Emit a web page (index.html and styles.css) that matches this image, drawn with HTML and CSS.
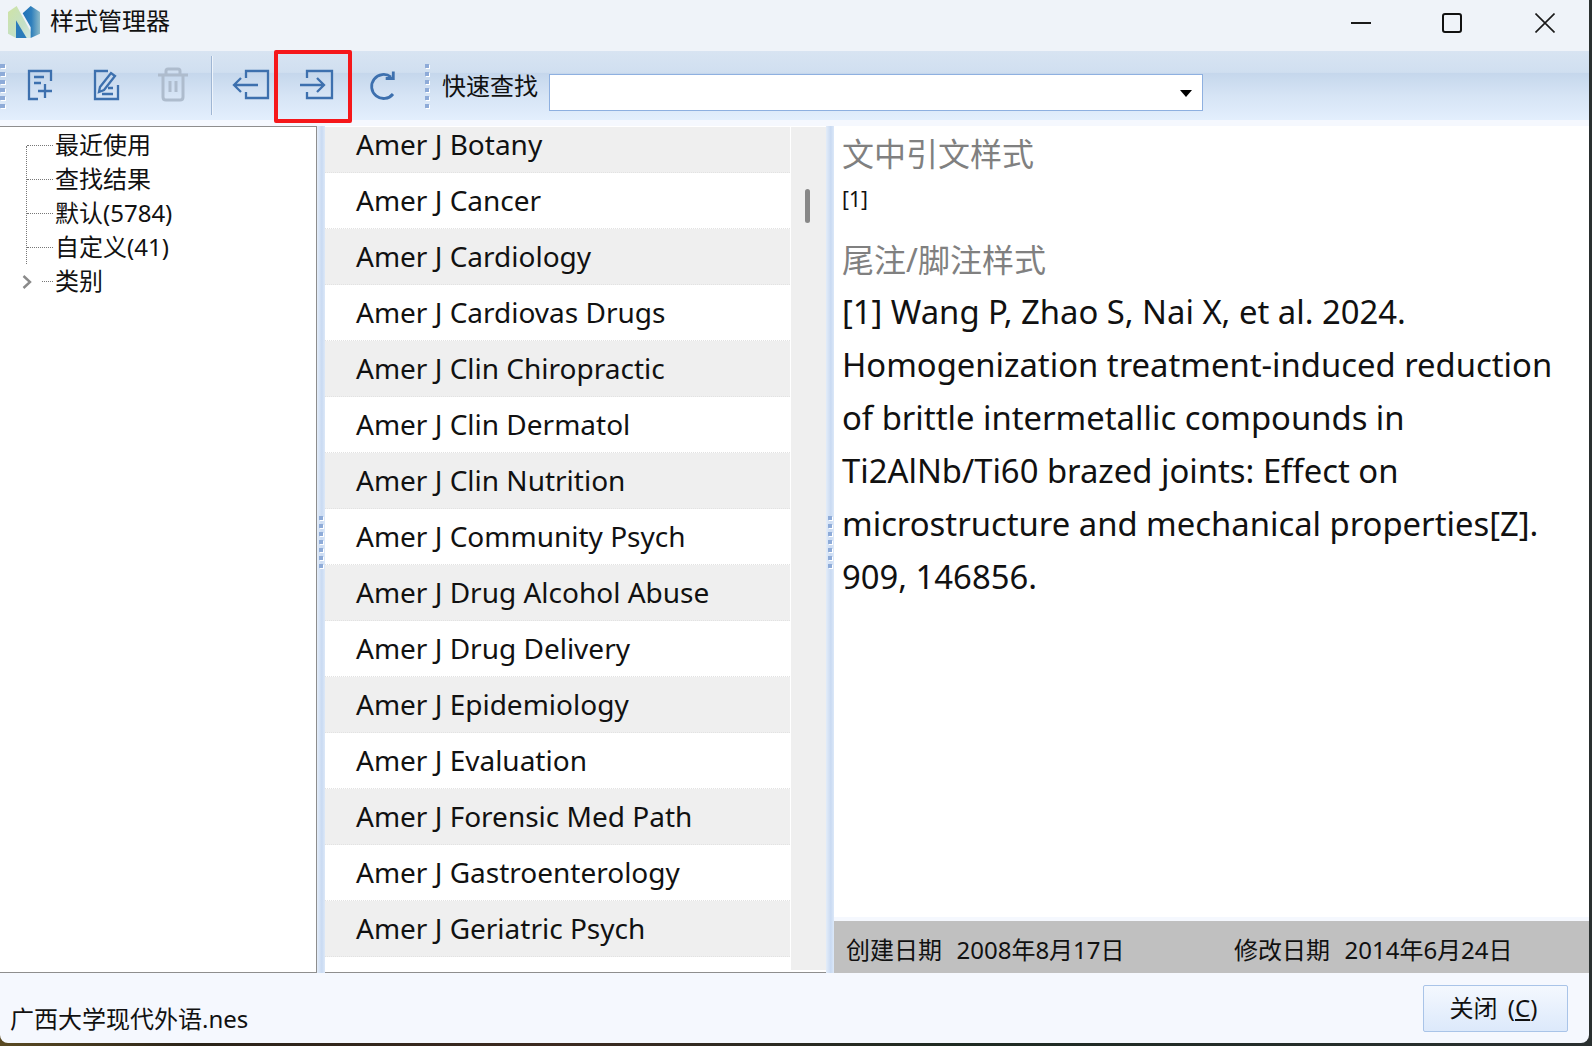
FILE: index.html
```html
<!DOCTYPE html>
<html lang="zh-CN">
<head>
<meta charset="utf-8">
<title>样式管理器</title>
<link rel="stylesheet" href="styles.css">
</head>
<body>
<div class="window">
  <header class="titlebar">
    <svg class="logo" width="40" height="40" viewBox="0 0 120 120">
      <defs>
        <linearGradient id="lg1" x1="0" y1="0" x2="1" y2="1"><stop offset="0" stop-color="#cfe3a4"/><stop offset="0.6" stop-color="#c4e0c6"/><stop offset="1" stop-color="#d7e9e6"/></linearGradient>
        <linearGradient id="lg2" x1="0" y1="0" x2="1" y2="0"><stop offset="0" stop-color="#1e70b8"/><stop offset="0.5" stop-color="#2f7fbc"/><stop offset="1" stop-color="#8dbac9"/></linearGradient>
      </defs>
      <path d="M12 30L38 12L84 96L80 108H36L12 95Z" fill="url(#lg1)"/>
      <path d="M36 55L68 108H36Z" fill="#2a7bbb"/>
      <path d="M56 34L80 12L108 30V95L80 108V76Z" fill="url(#lg2)"/>
    </svg>
    <span class="title-text">样式管理器</span>
    <div class="win-controls">
      <svg class="win-btn" width="20" height="20" viewBox="0 0 20 20"><path d="M0 10H20" stroke="#1a1a1a" stroke-width="2" fill="none"/></svg>
      <svg class="win-btn" width="20" height="20" viewBox="0 0 20 20"><rect x="1" y="1" width="18" height="18" rx="2" stroke="#111" stroke-width="2" fill="none"/></svg>
      <svg class="win-btn" width="20" height="20" viewBox="0 0 20 20"><path d="M0.5 0.5L19.5 19.5M19.5 0.5L0.5 19.5" stroke="#1a1a1a" stroke-width="1.6" fill="none"/></svg>
    </div>
  </header>

  <div class="toolbar">
    <div class="grip grip-edge"><i></i><i></i><i></i><i></i><i></i><i></i></div>
    <button class="tool" type="button">
      <svg width="40" height="40" viewBox="0 0 40 40" class="ico"><path d="M18 34H9V6H31V16M14 12H24M14 18H21M25 19V33M18 26H32"/></svg>
    </button>
    <button class="tool" type="button">
      <svg width="40" height="40" viewBox="0 0 40 40" class="ico"><path d="M22 6H9V34H32V20M14 22L25 8L29 11L18 25L13 27ZM16 29H27M22 23H27"/></svg>
    </button>
    <button class="tool" type="button">
      <svg width="40" height="40" viewBox="0 0 40 40" class="ico ico-off"><path d="M6 10H36M14 10V6Q14 4 16 4H26Q28 4 28 6V10M11 10V32Q11 35 14 35H28Q31 35 31 32V10M18 16V27M24 16V27"/></svg>
    </button>
    <div class="sep"></div>
    <button class="tool" type="button">
      <svg width="40" height="40" viewBox="0 0 40 40" class="ico"><path d="M16 13V6H38V33H16V27M28 20H4M11 13L4 20L11 27"/></svg>
    </button>
    <button class="tool" type="button">
      <svg width="40" height="40" viewBox="0 0 40 40" class="ico"><path d="M11 13V6H36V33H11V27M4 20H27M21 13L28 20L21 27"/></svg>
    </button>
    <button class="tool" type="button">
      <svg width="40" height="40" viewBox="0 0 40 40" class="ico ico-bold"><path d="M29 12A12 12 0 1 0 31 29M31.3 6.5V13.5H23.7"/></svg>
    </button>
    <div class="grip grip-mid"><i></i><i></i><i></i><i></i><i></i><i></i></div>
    <label class="find-label">快速查找</label>
    <div class="combo"><span class="combo-arrow"></span></div>
    <div class="highlight"></div>
  </div>
  <div class="strip"></div>

  <main class="panes">
    <nav class="tree">
      <div class="tree-line"></div>
      <div class="tree-item"><span class="dash"></span>最近使用</div>
      <div class="tree-item"><span class="dash"></span>查找结果</div>
      <div class="tree-item"><span class="dash"></span>默认(5784)</div>
      <div class="tree-item"><span class="dash"></span>自定义(41)</div>
      <div class="tree-item">
        <svg class="chev" width="10" height="14" viewBox="0 0 10 14"><path d="M1.5 1L8 7L1.5 13" fill="none" stroke="#8a8a8a" stroke-width="2.4"/></svg>
        <span class="dash dash-short"></span>类别
      </div>
    </nav>

    <div class="splitter"><div class="split-grip"><i></i><i></i><i></i><i></i><i></i><i></i><i></i></div></div>

    <section class="list">
      <div class="rows">
        <div class="row">Amer J Botany</div>
        <div class="row">Amer J Cancer</div>
        <div class="row">Amer J Cardiology</div>
        <div class="row">Amer J Cardiovas Drugs</div>
        <div class="row">Amer J Clin Chiropractic</div>
        <div class="row">Amer J Clin Dermatol</div>
        <div class="row">Amer J Clin Nutrition</div>
        <div class="row">Amer J Community Psych</div>
        <div class="row">Amer J Drug Alcohol Abuse</div>
        <div class="row">Amer J Drug Delivery</div>
        <div class="row">Amer J Epidemiology</div>
        <div class="row">Amer J Evaluation</div>
        <div class="row">Amer J Forensic Med Path</div>
        <div class="row">Amer J Gastroenterology</div>
        <div class="row">Amer J Geriatric Psych</div>
      </div>
      <div class="scrollbar"><div class="thumb"></div></div>
    </section>

    <div class="splitter splitter-right"><div class="split-grip"><i></i><i></i><i></i><i></i><i></i><i></i><i></i></div></div>

    <section class="preview">
      <div class="preview-body">
        <h2 class="pv-head">文中引文样式</h2>
        <p class="pv-cite">[1]</p>
        <h2 class="pv-head pv-head-2">尾注/脚注样式</h2>
        <p class="pv-ref">[1] Wang P, Zhao S, Nai X, et al. 2024. Homogenization treatment-induced reduction of brittle intermetallic compounds in Ti2AlNb/Ti60 brazed joints: Effect on microstructure and mechanical properties[Z]. 909, 146856.</p>
      </div>
      <div class="dates">
        <span class="date date-a">创建日期&nbsp;&nbsp;2008年8月17日</span>
        <span class="date">修改日期&nbsp;&nbsp;2014年6月24日</span>
      </div>
    </section>
  </main>

  <footer class="bottom">
    <span class="file">广西大学现代外语.nes</span>
    <button class="close" type="button">关闭 (<u>C</u>)</button>
  </footer>
</div>
</body>
</html>
```
FILE: styles.css
```css
* { box-sizing: border-box; }
html, body { margin: 0; height: 100%; }
body {
  width: 1592px;
  height: 1046px;
  overflow: hidden;
  background: linear-gradient(90deg, #5a4a22 0, #2a2318 12%, #3c2a20 35%, #1e2a22 60%, #2a3030 100%);
  font-family: "Noto Sans", "Noto Sans CJK SC", sans-serif;
  color: #000;
}
.window {
  width: 1589px;
  height: 1043px;
  background: #f5f8fe;
  border-radius: 0 0 8px 8px;
  display: flex;
  flex-direction: column;
  overflow: hidden;
}
.titlebar {
  height: 51px;
  flex: none;
  background: #eff3f9;
  display: flex;
  align-items: center;
  padding-left: 4px;
}
.logo { display: block; margin-top: -7px; }
.title-text { font-size: 24px; line-height: 30px; margin-left: 6px; color: #111; margin-top: -9px; }
.win-controls {
  margin-left: auto;
  display: flex;
  gap: 71px;
  padding-right: 34px;
  margin-top: -5px;
}
.win-controls .win-btn { display: block; }
.win-controls .win-btn:last-child { margin-left: 2px; }

.toolbar {
  position: relative;
  height: 69px;
  flex: none;
  display: flex;
  align-items: center;
  background: linear-gradient(180deg, #d8e4f2 0, #d0dff0 31%, #c5d7ec 32%, #d6e4f5 65%, #e3effd 100%);
}
.grip { display: flex; flex-direction: column; gap: 4px; }
.grip i { display: block; width: 5px; height: 4px; background: #8eabd8; box-shadow: 1px 1px 0 #fff; }
.grip-edge { width: 5px; margin-right: 2px; }
.grip-mid { margin-left: 10px; margin-right: 13px; }
.grip-mid i { width: 4px; }
.tool {
  width: 66px;
  height: 60px;
  padding: 0;
  border: 0;
  background: none;
  display: flex;
  align-items: center;
  justify-content: center;
}
.ico { display: block; fill: none; stroke: #3d70ae; stroke-width: 2.3; margin-top: -1px; }
.ico-off { stroke: #aebccd; stroke-width: 3; }
.ico-bold { stroke-width: 2.8; }
.sep { width: 1px; height: 59px; background: #9fb6d4; margin: 0 5px 0 6px; box-shadow: 1px 0 0 #eef4fb; }
.find-label { font-size: 24px; line-height: 30px; width: 107px; flex: none; color: #111; margin-top: 0; }
.combo {
  width: 654px;
  height: 37px;
  margin-top: 13px;
  background: #fff;
  border: 1px solid #8eb0e0;
  display: flex;
  align-items: center;
  justify-content: flex-end;
  padding-right: 10px;
}
.combo-arrow { width: 0; height: 0; border: 6.5px solid transparent; border-top: 7px solid #000; border-bottom: 0; margin-top: 2px; }
.highlight {
  position: absolute;
  left: 274px;
  top: -1px;
  width: 78px;
  height: 73px;
  border: 4px solid #f5171a;
  border-radius: 2px;
}
.strip { height: 6px; flex: none; background: #f5f8fe; }

.panes { height: 847px; flex: none; display: flex; }
.tree {
  position: relative;
  width: 317px;
  flex: none;
  background: #fff;
  border-top: 1px solid #8e8e8e;
  border-right: 1px solid #8e8e8e;
  border-bottom: 1px solid #8e8e8e;
  padding-top: 1px;
  font-size: 24px;
}
.tree-line {
  position: absolute;
  left: 26px;
  top: 19px;
  height: 118px;
  border-left: 1px dotted #777;
}
.tree-item {
  position: relative;
  height: 34px;
  line-height: 34px;
  padding-left: 55px;
  color: #111;
  white-space: nowrap;
}
.dash {
  position: absolute;
  left: 27px;
  top: 50%;
  width: 26px;
  border-top: 1px dotted #777;
}
.dash-short { left: 42px; width: 11px; }
.chev { position: absolute; left: 22px; top: 11px; display: block; }

.splitter {
  width: 8px;
  flex: none;
  background: linear-gradient(90deg, #e4edf9, #c9daf2 60%, #dce8f8);
  display: flex;
  align-items: center;
  justify-content: center;
}
.split-grip { display: flex; flex-direction: column; gap: 4px; margin-top: -16px; }
.split-grip i { display: block; width: 4px; height: 4px; background: #8eabd8; box-shadow: 1px 1px 0 #fff; }

.list {
  width: 501px;
  flex: none;
  display: flex;
  background: #fff;
  border-bottom: 1px solid #8e8e8e;
  overflow: hidden;
  padding-top: 1px;
}
.rows { width: 465px; flex: none; }
.row {
  height: 56px;
  line-height: 54px;
  padding-left: 31px;
  font-size: 28px;
  white-space: nowrap;
  color: #111;
  border-bottom: 1px dotted #e2e2e2;
}
.row:nth-child(odd) { background: #efefef; }
.row:first-child { height: 46px; line-height: 34px; }
.scrollbar {
  width: 35px;
  flex: none;
  margin: 0 0 2px 1px;
  background: #efefef;
  position: relative;
}
.thumb {
  position: absolute;
  left: 14px;
  top: 62px;
  width: 5px;
  height: 34px;
  background: #888;
  border-radius: 3px;
}

.preview { flex: 1; min-width: 0; display: flex; flex-direction: column; }
.preview-body { flex: 1; min-height: 0; background: #fff; padding: 0 30px 0 8px; margin-bottom: 4px; }
.pv-head {
  margin: 7px 0 0;
  font-size: 32px;
  line-height: 42px;
  font-weight: 400;
  color: #808080;
}
.pv-cite { margin: 9px 0 0; font-size: 21px; line-height: 30px; color: #111; }
.pv-head-2 { margin-top: 25px; }
.pv-ref {
  margin: 4px 0 0;
  font-size: 32.8px;
  line-height: 53px;
  color: #111;
}
.dates {
  height: 52px;
  flex: none;
  background: #c0c0c0;
  display: flex;
  align-items: center;
  padding: 2px 0 0 12px;
  font-size: 24px;
  color: #111;
  word-spacing: 1px;
}
.date-a { width: 388px; }

.bottom {
  flex: 1;
  display: flex;
  justify-content: space-between;
  padding: 12px 21px 0 10px;
}
.file { font-size: 24px; line-height: 30px; color: #111; margin-top: 19px; }
.close {
  width: 145px;
  height: 47px;
  border: 1px solid #a9c4e8;
  border-radius: 2px;
  background: linear-gradient(180deg, #f4f8fe, #dce9fb);
  font: 24px/30px "Noto Sans", "Noto Sans CJK SC", sans-serif;
  color: #111;
  padding: 0 4px 2px 0;
  word-spacing: 4px;
}
```
